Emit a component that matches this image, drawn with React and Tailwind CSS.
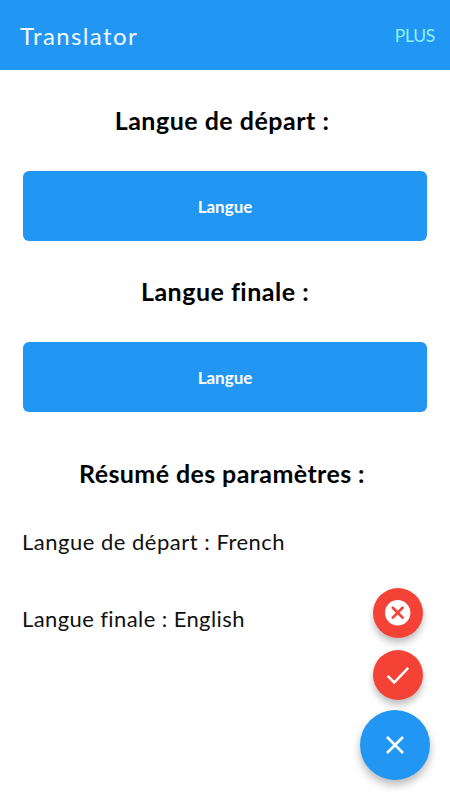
function Title({ children, className }) {
  return (
    <h2 className={`flex items-center justify-center whitespace-pre text-[25px] leading-9 font-bold text-black ${className}`}>
      {children}
    </h2>
  );
}

function LanguageButton() {
  return (
    <button className="mx-[23px] flex h-[70px] items-center justify-center rounded-[6px] bg-[#2196f3] pt-[1px] text-[17px] font-bold text-white">
      Langue
    </button>
  );
}

export default function App() {
  return (
    <div className="relative flex h-[800px] w-[450px] flex-col overflow-hidden bg-white font-['Lato','Open_Sans',sans-serif]">
      <header className="flex h-[70px] shrink-0 items-center justify-between bg-[#2196f3] pt-[2px] pr-[15px] pl-[20px]">
        <h1 className="text-[24px] tracking-[1.4px] text-[#f2f9ff]">Translator</h1>
        <span className="pt-[1px] text-[17.5px] tracking-[-0.3px] text-[#8ff3ff]">PLUS</span>
      </header>
      <main className="flex flex-col">
        <Title className="h-[101px] pr-[6px] pb-[2px] tracking-[0.5px]">Langue de départ :</Title>
        <LanguageButton />
        <Title className="h-[101px] pb-[2px] tracking-[0.5px]">Langue finale :</Title>
        <LanguageButton />
        <Title className="mt-[43px] mb-px h-9 pr-[6px] tracking-[0.4px]">Résumé des paramètres :</Title>
        <p className="mt-[34px] ml-[22px] text-[22px] leading-8 tracking-[0.5px] text-[#111]">Langue de départ : French</p>
        <p className="mt-[45px] ml-[22px] text-[22px] leading-8 tracking-[0.4px] text-[#111]">Langue finale : English</p>
      </main>
      <div className="absolute right-[20px] bottom-[20px] flex flex-col items-center">
        <button className="mr-[-5px] mb-[12px] flex size-[50px] items-center justify-center rounded-full bg-[#f44336] shadow-[0_5px_7px_rgba(0,0,0,0.25)]">
          <svg className="size-[26px]" viewBox="0 0 26 26" fill="none">
            <circle cx="12.7" cy="12.7" r="12.7" fill="white" />
            <path d="M7.8 7.8l9.8 9.8M17.6 7.8l-9.8 9.8" stroke="#f44336" strokeWidth="2.7" strokeLinecap="round" />
          </svg>
        </button>
        <button className="mr-[-5px] mb-[10px] flex size-[50px] items-center justify-center rounded-full bg-[#f44336] shadow-[0_5px_7px_rgba(0,0,0,0.25)]">
          <svg className="size-[26px]" viewBox="0 0 26 26" fill="none">
            <path d="M2.6 13.9l6.6 6.6L23.2 5.8" stroke="white" strokeWidth="2.5" />
          </svg>
        </button>
        <button className="flex size-[70px] items-center justify-center rounded-full bg-[#2196f3] shadow-[0_5px_8px_rgba(0,0,0,0.28)]">
          <svg className="size-[20px]" viewBox="0 0 20 20" fill="none">
            <path d="M2 2l16 16M18 2L2 18" stroke="white" strokeWidth="2.5" />
          </svg>
        </button>
      </div>
    </div>
  );
}
